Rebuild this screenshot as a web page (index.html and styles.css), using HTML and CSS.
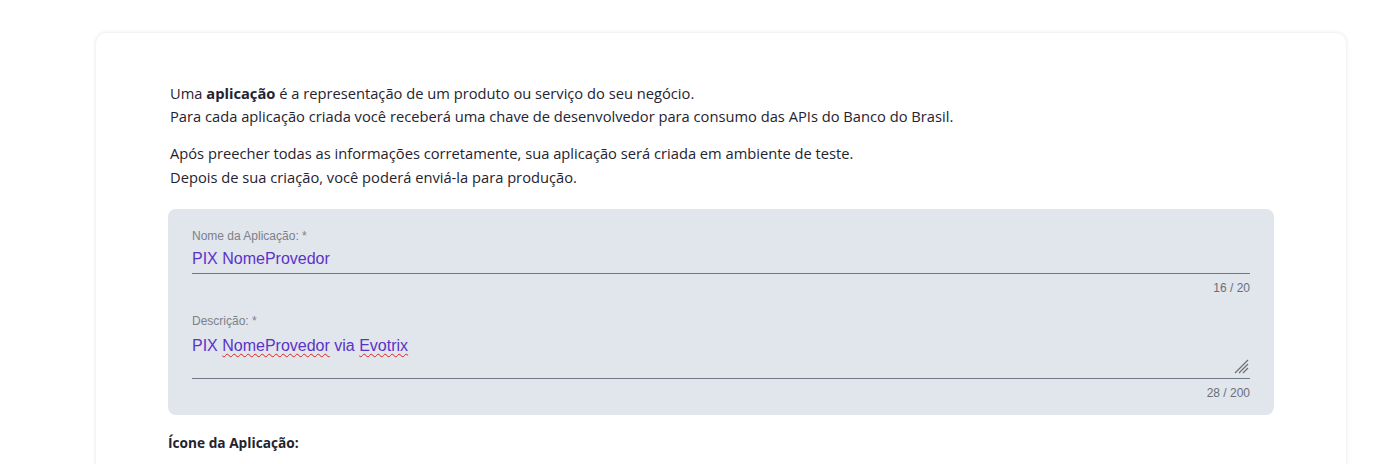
FILE: index.html
```html
<!DOCTYPE html>
<html lang="pt-BR">
<head>
<meta charset="utf-8">
<title>Aplicação</title>
<link rel="stylesheet" href="styles.css">
</head>
<body>
<main class="card">
  <section class="intro">
    <p>Uma <strong>aplicação</strong> é a representação de um produto ou serviço do seu negócio.<br>Para cada aplicação criada você receberá uma chave de desenvolvedor para consumo das APIs do Banco do Brasil.</p>
    <p>Após preecher todas as informações corretamente, sua aplicação será criada em ambiente de teste.<br>Depois de sua criação, você poderá enviá-la para produção.</p>
  </section>
  <section class="form-box">
    <div class="field">
      <label class="label">Nome da Aplicação: *</label>
      <div class="input">PIX NomeProvedor</div>
      <div class="counter">16 / 20</div>
    </div>
    <div class="field field-area">
      <label class="label">Descrição: *</label>
      <div class="input area">PIX <span class="spell">NomeProvedor</span> via <span class="spell">Evotrix</span>
        <svg class="grip" width="16" height="16" viewBox="0 0 16 16"><path d="M2 15L15 2M6 15L15 6M10 15L15 10" stroke="#6b6f76" stroke-width="1.2" fill="none"/></svg>
      </div>
      <div class="counter">28 / 200</div>
    </div>
  </section>
  <h3 class="icon-title">Ícone da Aplicação:</h3>
</main>
</body>
</html>
```
FILE: styles.css
```css
* { box-sizing: border-box; }
html, body { margin: 0; padding: 0; background: #ffffff; }
body { padding: 33px 43px 0 96px; font-family: "Open Sans", "Liberation Sans", sans-serif; color: #222; height: 464px; overflow: hidden; }
.card {
  background: #fff;
  border-radius: 10px;
  box-shadow: 0 0 4px rgba(0,0,0,0.12);
  padding: 49px 72px 40px 72px;
  height: 480px;
}
.intro { padding-left: 2px; }
.intro p { margin: 0 0 14px 0; font-size: 14.7px; line-height: 23px; color: #1f2430; }
.intro p + p { line-height: 23.5px; }
.intro strong { font-weight: 700; }
.form-box {
  margin-top: 20px;
  background: #e1e5ec;
  border-radius: 8px;
  padding: 20px 24px 0 24px;
  height: 206px;
}
.field { display: flex; flex-direction: column; }
.label { font-family: "Liberation Sans", Arial, sans-serif; font-size: 12px; color: #7c818a; line-height: 14px; }
.input {
  font-family: "Liberation Sans", Arial, sans-serif;
  font-size: 16px; color: #5a33c8; line-height: 20px;
  padding: 6px 0 4px 0;
  border-bottom: 1px solid #6d7888;
}
.area { position: relative; height: 51px; padding-top: 8px; }
.grip { position: absolute; right: 1px; bottom: 4px; }
.spell { text-decoration: underline wavy #e0201c; text-decoration-thickness: 1px; text-underline-offset: 2px; }
.counter { font-family: "Liberation Sans", Arial, sans-serif; font-size: 12px; color: #6b6f76; text-align: right; line-height: 14px; margin-top: 7px; }
.field-area { margin-top: 19px; }
.icon-title { margin: 18px 0 0 0; font-size: 13.7px; font-weight: 700; color: #1f2430; }
```
